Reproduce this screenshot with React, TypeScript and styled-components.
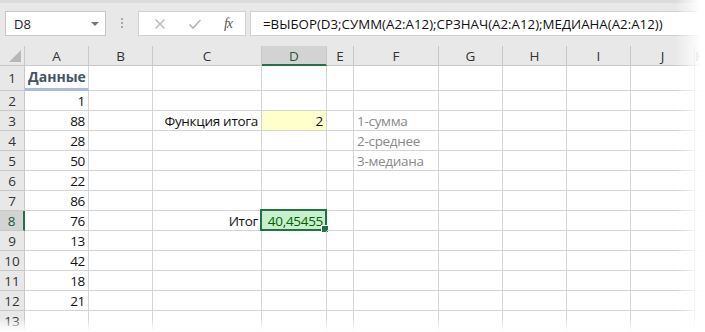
import React from "react";
import styled, { createGlobalStyle, css } from "styled-components";

const GlobalStyle = createGlobalStyle`
  html, body { margin: 0; padding: 0; background: #fff; }
  * { box-sizing: border-box; }
`;

const GREEN = "#217346";
const GRID = "#d4d4d4";

const Window = styled.div`
  position: relative;
  width: 705px;
  height: 332px;
  overflow: hidden;
  background: #fff;
  font-family: "Open Sans", "Noto Sans", sans-serif;
`;

const FormulaBar = styled.div`
  display: flex;
  align-items: flex-start;
  height: 46px;
  padding: 8px 0 0 5px;
  background: #e8e8e8;
  border-top: 3px solid #dcdcdc;
`;

const NameBox = styled.div`
  display: flex;
  align-items: center;
  justify-content: space-between;
  width: 101px;
  height: 25px;
  padding: 0 6px 0 8px;
  background: #fff;
  border: 1px solid #c6c6c6;
  font-size: 13px;
  color: #222;
`;

const Caret = styled.span`
  width: 0;
  height: 0;
  border-left: 4px solid transparent;
  border-right: 4px solid transparent;
  border-top: 4px solid #777;
`;

const Dots = styled.div`
  display: flex;
  flex-direction: column;
  gap: 2px;
  width: 32px;
  align-items: center;
  padding-top: 7px;
  span {
    width: 2px;
    height: 2px;
    background: #a8a8a8;
  }
`;

const ButtonBox = styled.div`
  display: flex;
  align-items: center;
  justify-content: space-around;
  width: 108px;
  height: 25px;
  padding: 0 2px 0 4px;
  background: #fff;
  border: 1px solid #d0d0d0;
`;

const FxIcon = styled.span`
  font-family: "Liberation Serif", "DejaVu Serif", serif;
  font-style: italic;
  font-size: 14px;
  color: #555;
  letter-spacing: -1px;
`;

const FormulaInput = styled.div`
  flex: 1;
  height: 25px;
  margin-left: 4px;
  padding: 1px 0 0 12px;
  background: #fff;
  border: 1px solid #d0d0d0;
  border-right: none;
  font-size: 13.3px;
  line-height: 22px;
  color: #111;
  white-space: nowrap;
`;

const Sheet = styled.div`
  display: grid;
  grid-template-columns: 25px 64px 64px 109px 65px 27px 85px 64px 64px 64px 64px 1fr;
  grid-template-rows: 20px 25px repeat(12, 20px);
  font-size: 13px;
`;

const Corner = styled.div`
  position: relative;
  background: #e8e8e8;
  border-right: 1px solid #c8c8c8;
  border-bottom: 1px solid #c8c8c8;
  &::after {
    content: "";
    position: absolute;
    right: 3px;
    bottom: 3px;
    border-left: 12px solid transparent;
    border-bottom: 12px solid #b7b7b7;
  }
`;

const ColHead = styled.div<{ $active?: boolean }>`
  display: flex;
  align-items: center;
  justify-content: center;
  background: ${(p) => (p.$active ? "#d3d3d3" : "#e8e8e8")};
  border-right: 1px solid #c8c8c8;
  border-bottom: ${(p) => (p.$active ? `2px solid ${GREEN}` : "1px solid #c8c8c8")};
  color: ${(p) => (p.$active ? "#1e5b3a" : "#333")};
  font-size: 13.5px;
  padding-top: ${(p) => (p.$active ? "1px" : "0")};
`;

const RowHead = styled.div<{ $active?: boolean }>`
  display: flex;
  align-items: center;
  justify-content: center;
  background: ${(p) => (p.$active ? "#d3d3d3" : "#e8e8e8")};
  border-right: ${(p) => (p.$active ? `2px solid ${GREEN}` : "1px solid #c8c8c8")};
  border-bottom: 1px solid #c8c8c8;
  color: ${(p) => (p.$active ? "#1e5b3a" : "#333")};
  font-size: 13.5px;
`;

type Variant = "plain" | "heading" | "input" | "good" | "note";

const Cell = styled.div<{ $align: "left" | "right"; $variant: Variant }>`
  position: relative;
  display: flex;
  align-items: flex-end;
  justify-content: ${(p) => (p.$align === "right" ? "flex-end" : "flex-start")};
  padding: 0 3px 0 3px;
  border-right: 1px solid ${GRID};
  border-bottom: 1px solid ${GRID};
  color: #111;
  white-space: nowrap;
  line-height: 18px;
  font-size: 13.5px;
  letter-spacing: -0.3px;
  ${(p) =>
    p.$variant === "heading" &&
    css`
      font-weight: 700;
      color: #44546a;
      font-size: 14px;
      line-height: 22px;
      letter-spacing: 0;
      border-bottom: 3px solid #a9bcdf;
    `}
  ${(p) =>
    p.$variant === "input" &&
    css`
      background: #ffffcc;
    `}
  ${(p) =>
    p.$variant === "good" &&
    css`
      background: #c6efce;
      color: #006100;
    `}
  ${(p) =>
    p.$variant === "note" &&
    css`
      color: #8a8a8a;
    `}
`;

const Selection = styled.div`
  position: absolute;
  left: -2px;
  top: -2px;
  right: -1px;
  bottom: -1px;
  border: 2px solid ${GREEN};
  pointer-events: none;
  &::after {
    content: "";
    position: absolute;
    right: -4px;
    bottom: -4px;
    width: 6px;
    height: 6px;
    background: ${GREEN};
    border: 1px solid #fff;
  }
`;

const RightFade = styled.div`
  position: absolute;
  top: 0;
  right: 0;
  bottom: 0;
  width: 30px;
  background: linear-gradient(to right, rgba(255, 255, 255, 0), #fff 85%);
  pointer-events: none;
`;

const BottomFade = styled.div`
  position: absolute;
  left: 0;
  right: 0;
  bottom: 0;
  height: 14px;
  background: linear-gradient(to bottom, rgba(255, 255, 255, 0), #fff 95%);
  pointer-events: none;
`;

const COLS = ["A", "B", "C", "D", "E", "F", "G", "H", "I", "J", "K"];

type CellDef = { text: string; align: "left" | "right"; variant?: Variant };

const numbers = [1, 88, 28, 50, 22, 86, 76, 13, 42, 18, 21];

const cells: Record<string, CellDef> = {
  A1: { text: "Данные", align: "left", variant: "heading" },
  C3: { text: "Функция итога", align: "right" },
  D3: { text: "2", align: "right", variant: "input" },
  F3: { text: "1-сумма", align: "left", variant: "note" },
  F4: { text: "2-среднее", align: "left", variant: "note" },
  F5: { text: "3-медиана", align: "left", variant: "note" },
  C8: { text: "Итог", align: "right" },
  D8: { text: "40,45455", align: "right", variant: "good" },
};
numbers.forEach((n, i) => {
  cells[`A${i + 2}`] = { text: String(n), align: "right" };
});

const CrossIcon = () => (
  <svg width="12" height="12" viewBox="0 0 12 12">
    <path d="M1.5 1.5 L10.5 10.5 M10.5 1.5 L1.5 10.5" stroke="#b4b4b4" strokeWidth="1.4" fill="none" />
  </svg>
);

const CheckIcon = () => (
  <svg width="14" height="12" viewBox="0 0 14 12">
    <path d="M1.5 6.5 L5 10 L12.5 2" stroke="#b4b4b4" strokeWidth="1.6" fill="none" />
  </svg>
);

export default function App() {
  const rows = Array.from({ length: 13 }, (_, i) => i + 1);
  return (
    <Window>
      <GlobalStyle />
      <FormulaBar>
        <NameBox>
          D8
          <Caret />
        </NameBox>
        <Dots>
          <span />
          <span />
          <span />
        </Dots>
        <ButtonBox>
          <CrossIcon />
          <CheckIcon />
          <FxIcon>fx</FxIcon>
        </ButtonBox>
        <FormulaInput>=ВЫБОР(D3;СУММ(A2:A12);СРЗНАЧ(A2:A12);МЕДИАНА(A2:A12))</FormulaInput>
      </FormulaBar>
      <Sheet>
        <Corner />
        {COLS.map((c) => (
          <ColHead key={c} $active={c === "D"}>
            {c}
          </ColHead>
        ))}
        {rows.map((r) => (
          <React.Fragment key={r}>
            <RowHead $active={r === 8}>{r}</RowHead>
            {COLS.map((c) => {
              const def = cells[`${c}${r}`];
              return (
                <Cell key={c} $align={def?.align ?? "left"} $variant={def?.variant ?? "plain"}>
                  {def?.text}
                  {c === "D" && r === 8 && <Selection />}
                </Cell>
              );
            })}
          </React.Fragment>
        ))}
      </Sheet>
      <RightFade />
      <BottomFade />
    </Window>
  );
}
